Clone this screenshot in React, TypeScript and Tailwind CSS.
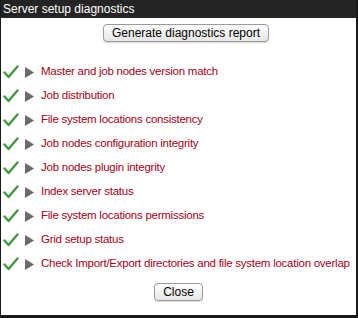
const checks = [
  "Master and job nodes version match",
  "Job distribution",
  "File system locations consistency",
  "Job nodes configuration integrity",
  "Job nodes plugin integrity",
  "Index server status",
  "File system locations permissions",
  "Grid setup status",
  "Check Import/Export directories and file system location overlap",
];

const Check = () => (
  <svg width="16" height="14" viewBox="0 0 16 14" className="shrink-0">
    <path d="M1.5 7.5 L5.5 12 L14.5 1.5" fill="none" stroke="#3f9a3a" strokeWidth="2.4" strokeLinecap="round" strokeLinejoin="round" />
  </svg>
);

const Arrow = () => (
  <svg width="9" height="11" viewBox="0 0 9 11" className="shrink-0">
    <path d="M0 0 L9 5.5 L0 11 Z" fill="#6b6b6b" />
  </svg>
);

const Btn = ({ children, className = "" }: { children: React.ReactNode; className?: string }) => (
  <button className={`h-[18px] px-[8px] rounded-[4px] border border-[#9a9a9a] bg-gradient-to-b from-white to-[#e6e6e6] text-[12px] leading-none text-black shadow-[0_1px_1px_rgba(0,0,0,0.15)] ${className}`}>
    {children}
  </button>
);

export default function App() {
  return (
    <div className="w-[358px] h-[318px] bg-white border-l border-r-2 border-b-3 border-[#1a1a1a] flex flex-col font-['Liberation_Sans',sans-serif]">
      <div className="h-[18px] bg-[#242424] text-white text-[12px] leading-[18px] pl-[2px]">
        Server setup diagnostics
      </div>
      <div className="flex justify-center mt-[6px]">
        <Btn className="ml-[15px]">Generate diagnostics report</Btn>
      </div>
      <ul className="mt-[18px] flex flex-col">
        {checks.map((c) => (
          <li key={c} className="h-[24px] flex items-center pl-[2px]">
            <Check />
            <span className="ml-[6px]"><Arrow /></span>
            <span className="ml-[7px] text-[11.5px] tracking-[-0.25px] text-[#a8001a] whitespace-nowrap">{c}</span>
          </li>
        ))}
      </ul>
      <div className="flex justify-center mt-[7px]">
        <Btn>Close</Btn>
      </div>
    </div>
  );
}
